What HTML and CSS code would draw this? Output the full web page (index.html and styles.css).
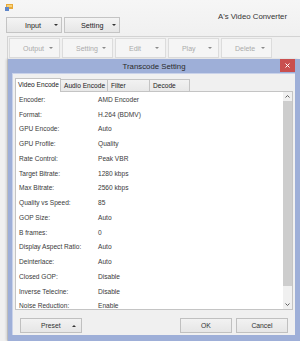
FILE: index.html
```html
<!DOCTYPE html>
<html lang="en">

<head>
    <meta charset="UTF-8">
    <meta name="viewport" content="width=device-width, initial-scale=1.0">
    <title>A's Video Converter</title>
    <link rel="stylesheet" href="styles.css">
</head>

<body>
    <div class="app">
        <div class="top">
            <div class="top-left">
                <svg class="app-icon" width="8" height="7" viewBox="0 0 8 7">
                    <rect x="1" y="0" width="7" height="5" fill="#e8a93a" />
                    <rect x="2" y="1" width="5" height="2" fill="#f6d27a" />
                    <rect x="0" y="3" width="4" height="4" fill="#5f86c9" />
                </svg>
                <div class="toolbar">
                    <button class="tb-btn">Input<span class="caret"></span></button>
                    <button class="tb-btn">Setting<span class="caret"></span></button>
                </div>
            </div>
            <div class="app-title">A's Video Converter</div>
        </div>

        <div class="group">
            <div class="toolbar2">
                <button class="tb2-btn">Output<span class="caret"></span></button>
                <button class="tb2-btn">Setting<span class="caret"></span></button>
                <button class="tb2-btn">Edit<span class="caret"></span></button>
                <button class="tb2-btn">Play<span class="caret"></span></button>
                <button class="tb2-btn">Delete<span class="caret"></span></button>
            </div>
        </div>

        <!-- modal dialog -->
        <div class="dialog">
            <div class="dialog-title">
                <span class="dialog-title-text">Transcode Setting</span>
                <button class="close-btn">
                    <svg width="5" height="5" viewBox="0 0 5 5">
                        <path d="M0.5 0.5 L4.5 4.5 M4.5 0.5 L0.5 4.5" stroke="#fff" stroke-width="1" />
                    </svg>
                </button>
            </div>
            <div class="dialog-body">
                <div class="tabs">
                    <div class="tab tab-active">Video Encode</div>
                    <div class="tab tab-audio">Audio Encode</div>
                    <div class="tab tab-filter">Filter</div>
                    <div class="tab tab-decode">Decode</div>
                </div>
                <div class="tab-panel">
                    <div class="list" id="list"></div>
                    <div class="scrollbar">
                        <div class="sb-arrow">
                            <svg width="5" height="3" viewBox="0 0 5 3"><path d="M0.5 2.5 L2.5 0.5 L4.5 2.5" fill="none" stroke="#606060" /></svg>
                        </div>
                        <div class="sb-thumb"></div>
                        <div class="sb-track"></div>
                        <div class="sb-arrow">
                            <svg width="5" height="3" viewBox="0 0 5 3"><path d="M0.5 0.5 L2.5 2.5 L4.5 0.5" fill="none" stroke="#606060" /></svg>
                        </div>
                    </div>
                </div>
                <div class="dialog-buttons">
                    <button class="btn btn-preset">Preset<span class="caret-up"></span></button>
                    <div class="btn-right">
                        <button class="btn">OK</button>
                        <button class="btn">Cancel</button>
                    </div>
                </div>
            </div>
        </div>
    </div>

    <script>
        const settings = [
            ['Encoder:', 'AMD Encoder'],
            ['Format:', 'H.264 (BDMV)'],
            ['GPU Encode:', 'Auto'],
            ['GPU Profile:', 'Quality'],
            ['Rate Control:', 'Peak VBR'],
            ['Target Bitrate:', '1280 kbps'],
            ['Max Bitrate:', '2560 kbps'],
            ['Quality vs Speed:', '85'],
            ['GOP Size:', 'Auto'],
            ['B frames:', '0'],
            ['Display Aspect Ratio:', 'Auto'],
            ['Deinterlace:', 'Auto'],
            ['Closed GOP:', 'Disable'],
            ['Inverse Telecine:', 'Disable'],
            ['Noise Reduction:', 'Enable']
        ];

        const list = document.getElementById('list');
        settings.forEach(s => {
            const row = document.createElement('div');
            row.className = 'row';
            row.innerHTML = `<span class="label">${s[0]}</span><span class="value">${s[1]}</span>`;
            list.appendChild(row);
        });
    </script>
</body>

</html>
```

FILE: styles.css
```css
* {
    box-sizing: border-box;
}

body {
    margin: 0;
    font-family: "Liberation Sans", Arial, sans-serif;
    background-color: #f0f0f0;
}

button {
    font-family: inherit;
    margin: 0;
    padding: 0;
}

.app {
    position: relative;
    width: 300px;
    height: 341px;
    overflow: hidden;
    background-color: #f0f0f0;
}

.top {
    display: flex;
    justify-content: space-between;
    height: 36px;
    background: linear-gradient(#f6f6f6, #f0f0f0);
}

.top-left {
    padding: 4px 0 0 5px;
}

.app-icon {
    display: block;
}

.toolbar {
    display: flex;
    gap: 2px;
    margin: 6px 0 0 1px;
}

.tb-btn {
    position: relative;
    width: 56px;
    height: 16px;
    border: 1px solid #c4c4c4;
    background: linear-gradient(#f4f4f4, #e6e6e6);
    font-size: 7.2px;
    color: #222;
    text-align: left;
    padding-left: 18px;
}

.tb-btn:last-child {
    padding-left: 16px;
}

.caret {
    position: absolute;
    right: 3px;
    top: 50%;
    margin-top: -1px;
    border-left: 2px solid transparent;
    border-right: 2px solid transparent;
    border-top: 2px solid #333;
}

.app-title {
    padding: 12px 13px 0 0;
    font-size: 7.8px;
    line-height: 10px;
    color: #333;
}

.group {
    margin-left: 7px;
    height: 305px;
    border-left: 1px solid #d3d3d3;
    border-top: 1px solid #d3d3d3;
    padding: 1px 0 0 1px;
}

.toolbar2 {
    display: flex;
    gap: 1.7px;
}

.tb2-btn {
    position: relative;
    width: 51.3px;
    height: 20px;
    border: 1px solid #dcdcdc;
    background-color: #f5f5f5;
    font-size: 7px;
    color: #ababab;
    text-align: left;
    padding-left: 13px;
}

.tb2-btn .caret {
    right: 6px;
    border-top-color: #8a8a8a;
}

/* modal window */
.dialog {
    position: absolute;
    left: 8px;
    top: 59px;
    width: 292px;
    height: 282px;
    background-color: #9eafd8;
    padding: 0 5px 6px 4px;
    box-shadow: -2px 0 2px rgba(0, 0, 0, 0.12);
}

.dialog-title {
    display: grid;
    grid-template-columns: 1fr auto 1fr;
    align-items: center;
    height: 14px;
}

.dialog-title-text {
    grid-column: 2;
    font-size: 7.8px;
    color: #2a2a2a;
    padding-left: 1px;
}

.close-btn {
    grid-column: 3;
    justify-self: end;
    align-self: start;
    width: 15px;
    height: 13px;
    border: none;
    background-color: #c94f4f;
    display: flex;
    align-items: center;
    justify-content: center;
}

.close-btn svg {
    display: block;
}

.dialog-body {
    height: 262px;
    background-color: #f0f0f0;
    border-left: 1px solid #c9d2ea;
    border-top: 1px solid #c9d2ea;
    padding: 3px 2px 0 2px;
}

.tabs {
    display: flex;
    height: 14px;
    align-items: flex-end;
}

.tab {
    height: 12px;
    border: 1px solid #c4c4c4;
    border-bottom: none;
    border-left: none;
    background: linear-gradient(#f2f2f2, #e8e8e8);
    font-size: 6.6px;
    line-height: 11px;
    color: #222;
    padding-left: 3px;
}

.tab-active {
    position: relative;
    z-index: 1;
    width: 46px;
    height: 14px;
    margin-bottom: -1px;
    border-left: 1px solid #c4c4c4;
    background: #fff;
    line-height: 12px;
    padding-left: 2px;
}

.tab-audio {
    width: 47px;
}

.tab-filter {
    width: 42px;
}

.tab-decode {
    width: 40px;
}

.tab-panel {
    display: flex;
    width: 278px;
    height: 219px;
    border: 1px solid #c4c4c4;
    background-color: #fff;
}

.list {
    flex: 1;
    padding-left: 3px;
}

.row {
    display: flex;
    height: 14.75px;
    align-items: center;
    font-size: 6.6px;
    color: #3a3a3a;
}

.label {
    width: 79px;
}

.scrollbar {
    width: 9px;
    display: flex;
    flex-direction: column;
    background-color: #f0f0f0;
}

.sb-arrow {
    height: 9px;
    display: flex;
    align-items: center;
    justify-content: center;
}

.sb-arrow svg {
    display: block;
}

.sb-thumb {
    height: 185px;
    background-color: #cdcdcd;
}

.sb-track {
    flex: 1;
}

.dialog-buttons {
    display: flex;
    justify-content: space-between;
    padding: 8px 5px 0 5px;
    width: 278px;
}

.btn-right {
    display: flex;
    gap: 4px;
}

.btn {
    width: 52px;
    height: 15px;
    border: 1px solid #c0c0c0;
    background: linear-gradient(#f2f2f2, #e6e6e6);
    font-size: 6.8px;
    color: #333;
}

.btn-preset {
    position: relative;
    width: 62px;
    text-align: left;
    padding-left: 20px;
}

.caret-up {
    position: absolute;
    right: 5px;
    top: 50%;
    margin-top: -1px;
    border-left: 2px solid transparent;
    border-right: 2px solid transparent;
    border-bottom: 2px solid #333;
}
```
